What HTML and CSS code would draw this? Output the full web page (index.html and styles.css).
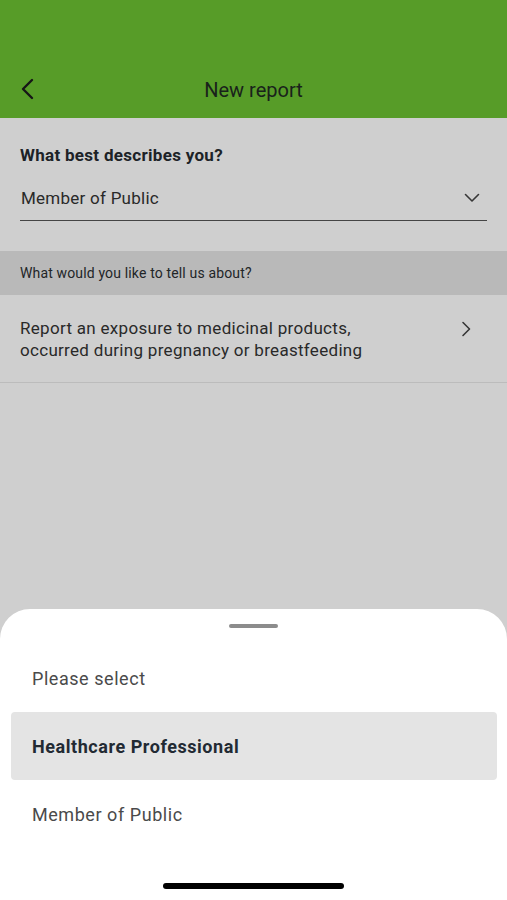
FILE: index.html
```html
<!DOCTYPE html>
<html lang="en">
<head>
    <meta charset="UTF-8">
    <meta name="viewport" content="width=device-width, initial-scale=1.0">
    <title>New report</title>
    <link rel="stylesheet" href="styles.css">
</head>
<body>

<div class="screen">
    <header class="topbar">
        <button class="back" aria-label="Back">
            <svg width="16" height="22" viewBox="0 0 16 22"><path d="M12 2 L3 11 L12 20" fill="none" stroke="#1c1c1c" stroke-width="2.4" stroke-linecap="round" stroke-linejoin="round"/></svg>
        </button>
        <h1>New report</h1>
    </header>

    <section class="field">
        <label>What best describes you?</label>
        <div class="select">
            <span>Member of Public</span>
            <svg width="16" height="10" viewBox="0 0 16 10"><path d="M1.5 1.5 L8 8 L14.5 1.5" fill="none" stroke="#444" stroke-width="1.6" stroke-linecap="round" stroke-linejoin="round"/></svg>
        </div>
    </section>

    <div class="section-title">What would you like to tell us about?</div>
    <div class="row">
        <p>Report an exposure to medicinal products,<br>occurred during pregnancy or breastfeeding</p>
        <svg width="10" height="16" viewBox="0 0 10 16"><path d="M2 1.5 L8.5 8 L2 14.5" fill="none" stroke="#444" stroke-width="1.6" stroke-linecap="round" stroke-linejoin="round"/></svg>
    </div>

    <div class="overlay"></div>

    <div class="sheet">
        <div class="handle"></div>
        <ul class="options">
            <li>Please select</li>
            <li class="active">Healthcare Professional</li>
            <li>Member of Public</li>
        </ul>
        <div class="home-bar"></div>
    </div>
</div>

</body>
</html>
```

FILE: styles.css
```css
body {
    margin: 0;
    padding: 0;
    font-family: 'Roboto', 'Noto Sans', sans-serif;
    color: #2b2f33;
    background: #fff;
}
.screen {
    position: relative;
    width: 507px;
    height: 900px;
    overflow: hidden;
    background: #fff;
}
.topbar {
    height: 118px;
    background: #6cc132;
    display: flex;
    align-items: flex-end;
    justify-content: center;
    position: relative;
}
.topbar h1 {
    margin: 0 0 16px;
    font-size: 20px;
    font-weight: 400;
    color: #1f2a22;
    line-height: 24px;
}
.back {
    position: absolute;
    left: 20px;
    bottom: 18px;
    background: none;
    border: none;
    padding: 0;
    display: flex;
}
.field {
    padding: 27px 20px 30px;
}
.field label {
    display: block;
    font-size: 17px;
    font-weight: 700;
    letter-spacing: 0.3px;
    color: #262b30;
    line-height: 20px;
}
.select {
    margin-top: 22px;
    padding: 0 7px 11px 1px;
    border-bottom: 1.5px solid #555;
    display: flex;
    align-items: center;
    justify-content: space-between;
    font-size: 17px;
    letter-spacing: 0.25px;
    color: #333;
    line-height: 22px;
}
.section-title {
    background: #e4e4e4;
    height: 44px;
    padding: 0 20px;
    display: flex;
    align-items: center;
    font-size: 14px;
    letter-spacing: 0.15px;
    color: #2a2e32;
}
.row {
    display: flex;
    align-items: flex-start;
    justify-content: space-between;
    padding: 22px 36px 21px 20px;
    border-bottom: 1px solid #e8e8e8;
}
.row p {
    margin: 0;
    font-size: 17px;
    letter-spacing: 0.3px;
    line-height: 22px;
    color: #333;
}
.row svg {
    margin-top: 4px;
}
.overlay {
    position: absolute;
    inset: 0;
    background: rgba(0, 0, 0, 0.19);
}
.sheet {
    position: absolute;
    left: 0;
    right: 0;
    bottom: 0;
    height: 291px;
    background: #fff;
    border-radius: 30px 30px 0 0;
    display: flex;
    flex-direction: column;
}
.handle {
    width: 49px;
    height: 4px;
    border-radius: 2px;
    background: #8c8c8c;
    margin: 15px auto 0;
}
.options {
    list-style: none;
    margin: 16px 10px 0 11px;
    padding: 0;
}
.options li {
    height: 68px;
    display: flex;
    align-items: center;
    padding-left: 21px;
    font-size: 18px;
    letter-spacing: 0.55px;
    color: #4a4a4a;
    border-radius: 4px;
}
.options li.active {
    background: #e4e4e4;
    font-weight: 700;
    color: #222a33;
}
.home-bar {
    width: 181px;
    height: 6px;
    border-radius: 3px;
    background: #000;
    margin: auto auto 11px;
}
```
